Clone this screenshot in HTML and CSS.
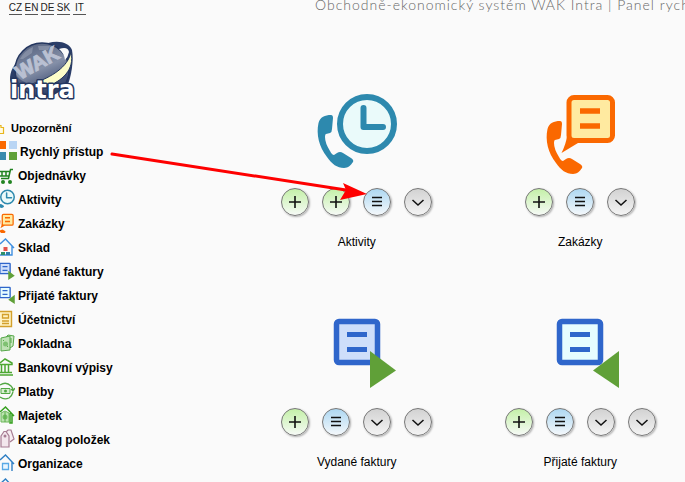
FILE: index.html
```html
<!DOCTYPE html>
<html lang="cs">
<head>
  <meta charset="UTF-8">
  <meta name="viewport" content="width=device-width, initial-scale=1.0">
  <title>WAK Intra</title>
  <link rel="stylesheet" href="styles.css">
</head>
<body>
  <!-- shared icons -->
  <svg class="defs" aria-hidden="true">
    <symbol id="handset" viewBox="0 0 80 80" overflow="visible">
      <path fill="currentColor" d="M14 23C8 23 3 25 1.500 31C-1 42 2 55 10 65C15 72 20 76 27 76C31 76 34 73 36 70Q37 68 34 66L26 61Q23 59 20 61L17 63Q15 63 13 59Q8 51 8 45Q8 42 9 42L13 41Q15 40 15 37L16 26Q16 23 14 23Z"/>
    </symbol>
    <symbol id="plus" viewBox="0 0 28 28"><path d="M14 8V20M8 14H20" stroke="#111" stroke-width="1.600"/></symbol>
    <symbol id="list" viewBox="0 0 28 28"><path d="M9 9.500H19M9 13.500H19M9 17.500H19" stroke="#111" stroke-width="1.300"/></symbol>
    <symbol id="down" viewBox="0 0 28 28"><path d="M8.500 12L14 17L19.500 12" stroke="#111" stroke-width="1.500" fill="none"/></symbol>
    <g id="i-aktivity">
      <circle cx="50" cy="32" r="27" fill="#eafafa" stroke="#2d89ae" stroke-width="6"/>
      <path d="M46.500 16V35H66" fill="none" stroke="#2d89ae" stroke-width="6" stroke-linecap="round" stroke-linejoin="round"/>
      <use href="#handset" width="80" height="80" color="#2d89ae"/>
    </g>
    <g id="i-zakazky">
      <path d="M27 44Q26 52 21.500 61L38 51V44Z" fill="#fa6800"/>
      <rect x="29" y="5.500" width="43.500" height="43" rx="5" fill="#ffeaa0" stroke="#fa6800" stroke-width="5"/>
      <path d="M40 19H60M40 34H60" stroke="#fa6800" stroke-width="5.500"/>
      <use href="#handset" x="6" y="6" width="80" height="80" color="#fa6800"/>
    </g>
    <g id="i-vydane">
      <rect x="19.500" y="9.500" width="41" height="41" rx="2.500" fill="#cedefa" stroke="#2f66cb" stroke-width="5.500"/>
      <path d="M30 22.500H50M30 37.500H50" stroke="#2f66cb" stroke-width="5"/>
      <path d="M53 39L79 58.500L53 76Z" fill="#60a038"/>
    </g>
    <g id="i-prijate">
      <rect x="19.500" y="9.500" width="41" height="41" rx="2.500" fill="#e6fcff" stroke="#2f66cb" stroke-width="5.500"/>
      <path d="M30 22.500H50M30 37.500H50" stroke="#2f66cb" stroke-width="5"/>
      <path d="M79 39L53 58.500L79 76Z" fill="#60a038"/>
    </g>
  </svg>

  <aside class="sidebar">
    <nav class="langs" aria-label="Jazyk">
      <a href="#">CZ</a>
      <a href="#">EN</a>
      <a href="#">DE</a>
      <a href="#">SK</a>
      <a href="#">IT</a>
    </nav>

    <a class="logo" href="#" aria-label="WAK intra">
      <svg viewBox="0 0 70 62">
        <defs>
          <linearGradient id="globe" x1="0.200" y1="0" x2="0.600" y2="1">
            <stop offset="0" stop-color="#56627f"/>
            <stop offset="0.500" stop-color="#8590a8"/>
            <stop offset="1" stop-color="#26365f"/>
          </linearGradient>
        </defs>
        <path d="M40 2C52 -1 61 2 64 9C66 20 63 36 60 43L38 50Z" fill="#2a3d68"/>
        <path d="M10 20C2 28 0 38 4 45L24 48Z" fill="#2a3d68"/>
        <ellipse cx="34" cy="29" rx="27" ry="27" fill="url(#globe)" stroke="#24365f" stroke-width="1.500"/>
        <path d="M8 34C16 44 26 44 36 40L50 34L60 30L57 44H10Z" fill="#3d4d74" opacity="0.700"/>
        <path d="M12 18Q17 9 25 6L24 12L15 18ZM30 5L42 5L40 9L31 9Z" fill="#a0a8ba" opacity="0.500"/>
        <path d="M51 8Q60 5 61 11Q60 16 57 19Q56 12 51 8Z" fill="#fafafa"/>
        <path d="M63 11C60 26 44 36 24 43L38 46C54 40 67 29 63 11Z" fill="#fdfdc8" stroke="#24365f"/>
        <text class="logo-wak" x="12" y="39" transform="rotate(-29 12 39)">WAK</text>
        <text class="logo-intra" x="2" y="57">intra</text>
      </svg>
    </a>

    <ul class="menu">
      <li><a class="small" href="#">
        <svg viewBox="0 0 5 20"><path d="M0 7.500H1V9.500H3.500V15.500H0" fill="#fffbe5" stroke="#e8b61e" stroke-width="1.200"/></svg>
        Upozornění</a></li>
      <li><a class="wide" href="#">
        <svg viewBox="0 0 17 20"><path d="M0 0H6V8H0Z" fill="#fa6800"/><path d="M9 0H17V8H9Z" fill="#b9d5f4"/><path d="M0 11H6V19H0Z" fill="#398bae"/><path d="M9 11H17V19H9Z" fill="#60a038"/></svg>
        Rychlý přístup</a></li>
      <li><a href="#">
        <svg viewBox="0 0 15 20"><path d="M13 4.500H10.500L8.500 13.500H1M0 6.500H10L9 11H0M2 6.500V11M6 6.500V11" fill="none" stroke="#218321" stroke-width="1.500"/><circle cx="3" cy="17" r="2" fill="#218321"/><circle cx="10" cy="17" r="2" fill="#218321"/></svg>
        Objednávky</a></li>
      <li><a href="#">
        <svg viewBox="20 0 60 80"><use href="#i-aktivity"/></svg>
        Aktivity</a></li>
      <li><a href="#">
        <svg viewBox="20 0 60 80"><use href="#i-zakazky"/></svg>
        Zakázky</a></li>
      <li><a href="#">
        <svg viewBox="0 0 15 20"><path d="M0 7L5.500 2L14 11M12 9V18H0" fill="none" stroke="#3f8fe0" stroke-width="1.400"/><path d="M3.500 10H7.500V14H3.500Z" fill="#e2524c"/><path d="M1 15H5V18H1Z" fill="#2d8f6a"/><path d="M6 15H10V18H6Z" fill="#2d7fae"/></svg>
        Sklad</a></li>
      <li><a href="#">
        <svg viewBox="20 0 60 80"><use href="#i-vydane"/></svg>
        Vydané faktury</a></li>
      <li><a href="#">
        <svg viewBox="20 0 60 80"><use href="#i-prijate"/></svg>
        Přijaté faktury</a></li>
      <li><a href="#">
        <svg viewBox="0 0 15 20"><path d="M0 2.500H11.500V17.500H0" fill="#fff3c4" stroke="#d3a02b" stroke-width="1.400"/><path d="M2.500 5.500H8.500V9H2.500ZM2 12H9M2 14.500H9" fill="none" stroke="#d3a02b" stroke-width="1.300"/></svg>
        Účetnictví</a></li>
      <li><a href="#">
        <svg viewBox="0 0 15 20"><path d="M5 5L8 2L14 3L13 13L10 15" fill="#cdeac3" stroke="#56a84a"/><path d="M1 5L10 3V17L1 18Z" fill="#bfe2b4" stroke="#56a84a"/><circle cx="5.500" cy="11" r="2.500" fill="#7fc172"/><path d="M3 7L4 8M8 14L7 13M11 5V10" stroke="#56a84a"/></svg>
        Pokladna</a></li>
      <li><a href="#">
        <svg viewBox="0 0 15 20"><path d="M0 6L5 2L12 6V7.500H0M1.500 8V15M5 8V15M8.500 8V15M0 15.500H12M0 18H13" fill="none" stroke="#4ca832" stroke-width="1.500"/></svg>
        Bankovní výpisy</a></li>
      <li><a href="#">
        <svg viewBox="0 0 15 20"><path d="M0 4Q6 0 11 5Q13 7 13 9M13 11Q12 15 9 17Q4 19 0 16M11 8L13 10L15 7" fill="none" stroke="#52a844" stroke-width="1.300"/><path d="M1 7.500H10V12.500H1Z" fill="#d6efcf" stroke="#52a844"/><circle cx="5.500" cy="10" r="1.500" fill="#52a844"/></svg>
        Platby</a></li>
      <li><a href="#">
        <svg viewBox="0 0 15 20"><path d="M0 7L5.500 2L14 11M12 9V18H10V8" fill="none" stroke="#36a01f" stroke-width="1.500"/><path d="M1 8L5 6L9 8V17H1Z" fill="#bde3b2" stroke="#6cb85b"/><circle cx="5" cy="12" r="2.500" fill="#72bd62"/><path d="M5 7V17" stroke="#58ac48"/></svg>
        Majetek</a></li>
      <li><a href="#">
        <svg viewBox="0 0 15 20"><path d="M6 3L8 1H11L14 10L10 13" fill="#f7eef2" stroke="#a77d93" stroke-width="1.200"/><path d="M1 7L4 2.500H6L9 7V18H1Z" fill="#f3e7ed" stroke="#a77d93" stroke-width="1.200"/><circle cx="5" cy="7" r="1.500" fill="#a77d93"/></svg>
        Katalog položek</a></li>
      <li><a href="#">
        <svg viewBox="0 0 15 20"><path d="M0 7L5.500 2L14 11M12 9V18" fill="none" stroke="#2f7fc4" stroke-width="1.400"/><path d="M2.500 10.500H8.500V16.500H2.500Z" fill="#e9f6ff" stroke="#58a9e6" stroke-width="1.300"/></svg>
        Organizace</a></li>
      <li><a href="#" aria-label="Další">
        <svg viewBox="0 0 15 20"><path d="M0 7L5.500 2L14 11M12 9V18" fill="none" stroke="#2f7fc4" stroke-width="1.400"/></svg></a></li>
    </ul>
  </aside>

  <main class="content">
    <h1>Obchodně-ekonomický systém WAK Intra | Panel rychlého přístupu</h1>

    <div class="tiles">
      <section class="tile">
        <svg class="tile-icon" viewBox="0 0 80 80"><use href="#i-aktivity"/></svg>
        <div class="actions">
          <button class="add" aria-label="Přidat"><svg><use href="#plus"/></svg></button>
          <button class="add" aria-label="Přidat"><svg><use href="#plus"/></svg></button>
          <button class="list" aria-label="Seznam"><svg><use href="#list"/></svg></button>
          <button class="more" aria-label="Více"><svg><use href="#down"/></svg></button>
        </div>
        <h2>Aktivity</h2>
      </section>

      <section class="tile">
        <svg class="tile-icon" viewBox="0 0 80 80"><use href="#i-zakazky"/></svg>
        <div class="actions">
          <button class="add" aria-label="Přidat"><svg><use href="#plus"/></svg></button>
          <button class="list" aria-label="Seznam"><svg><use href="#list"/></svg></button>
          <button class="more" aria-label="Více"><svg><use href="#down"/></svg></button>
        </div>
        <h2>Zakázky</h2>
      </section>

      <section class="tile">
        <svg class="tile-icon" viewBox="0 0 80 80"><use href="#i-vydane"/></svg>
        <div class="actions">
          <button class="add" aria-label="Přidat"><svg><use href="#plus"/></svg></button>
          <button class="list" aria-label="Seznam"><svg><use href="#list"/></svg></button>
          <button class="more" aria-label="Více"><svg><use href="#down"/></svg></button>
          <button class="more" aria-label="Více"><svg><use href="#down"/></svg></button>
        </div>
        <h2>Vydané faktury</h2>
      </section>

      <section class="tile">
        <svg class="tile-icon" viewBox="0 0 80 80"><use href="#i-prijate"/></svg>
        <div class="actions">
          <button class="add" aria-label="Přidat"><svg><use href="#plus"/></svg></button>
          <button class="list" aria-label="Seznam"><svg><use href="#list"/></svg></button>
          <button class="more" aria-label="Více"><svg><use href="#down"/></svg></button>
          <button class="more" aria-label="Více"><svg><use href="#down"/></svg></button>
        </div>
        <h2>Přijaté faktury</h2>
      </section>
    </div>
  </main>

  <!-- arrow from the menu to the list button -->
  <svg class="pointer" viewBox="0 0 260 50" aria-hidden="true">
    <path d="M2 5L236 41" stroke="#fe0000" stroke-width="3" stroke-linecap="round"/>
    <path d="M257 45L230 51L236 41L233 34Z" fill="#fe0000"/>
  </svg>
</body>
</html>
```

FILE: styles.css
```css
* {
  box-sizing: border-box;
}
body {
  display: flex;
  height: 100vh;
  margin: 0;
  overflow: hidden;
  background-color: #fafafa;
  color: #000;
  font-family: "Liberation Sans", Arial, sans-serif;
  font-size: 12px;
}
a {
  color: inherit;
  text-decoration: none;
}
.defs {
  position: absolute;
  width: 0;
  height: 0;
}

/* sidebar */
.sidebar {
  flex: 0 0 245px;
}
.langs {
  display: flex;
  gap: 3px;
  padding: 2px 9px 0;
}
.langs a {
  display: flex;
  justify-content: center;
  width: 13px;
  border-bottom: 1px solid #555;
  color: #222;
  font-size: 10px;
  line-height: 12px;
}
.logo {
  display: block;
  width: 70px;
  margin: 26px 0 0 8px;
}
.logo svg {
  display: block;
  overflow: visible;
}
.logo-wak {
  fill: #b9c0d2;
  stroke: #b9c0d2;
  stroke-width: 1px;
  font: bold 20px "Liberation Sans", sans-serif;
}
.logo-intra {
  fill: #fff;
  stroke: #24365f;
  stroke-width: 3px;
  stroke-linejoin: round;
  paint-order: stroke;
  font: bold 24px "DejaVu Sans", sans-serif;
}
.menu {
  margin: 13px 0 0;
  padding: 0;
  list-style: none;
}
.menu a {
  display: flex;
  align-items: center;
  gap: 3px;
  height: 24px;
  font-weight: bold;
  white-space: nowrap;
}
.menu svg {
  flex: none;
  width: 15px;
  height: 20px;
  margin-bottom: 3px;
}
.menu .small {
  gap: 6px;
  font-size: 11px;
}
.menu .small svg {
  width: 5px;
  margin-bottom: 0;
}
.menu .wide svg {
  width: 17px;
}

/* content */
.content {
  flex: 1;
  min-width: 0;
  margin-right: -7px;
}
h1 {
  margin: -4px 0 0 70px;
  color: #666;
  font-family: "Century Gothic", Lato, sans-serif;
  font-size: 14px;
  font-weight: 300;
  letter-spacing: 1px;
  line-height: 18px;
  white-space: nowrap;
}
.tiles {
  display: grid;
  grid-template-columns: repeat(auto-fill, minmax(210px, 1fr));
  row-gap: 62px;
  padding-top: 78px;
}
.tile {
  display: flex;
  flex-direction: column;
  align-items: center;
}
.tile-icon {
  width: 80px;
  height: 80px;
  overflow: visible;
}
.actions {
  display: flex;
  gap: 13px;
  margin: 16px 0 18px;
}
.actions button {
  width: 28px;
  height: 28px;
  padding: 0;
  border: 1px solid #777;
  border-radius: 50%;
  box-shadow: 1px 1px 2px rgba(0,0,0,0.3);
  cursor: pointer;
}
.actions svg {
  display: block;
  width: 28px;
  height: 28px;
  margin: -1px;
}
.actions .add {
  background: linear-gradient(#c4f0a8, #f6faf6);
}
.actions .list {
  background: linear-gradient(#aed8f2, #f4f8fb);
}
.actions .more {
  background: linear-gradient(#d2d2d2, #f4f4f4);
}
h2 {
  margin: 0;
  font-size: 12px;
  font-weight: normal;
  line-height: 16px;
}

/* lies over the menu and the tiles */
.pointer {
  position: absolute;
  left: 110px;
  top: 149px;
  width: 260px;
  height: 50px;
  overflow: visible;
  pointer-events: none;
}
```
